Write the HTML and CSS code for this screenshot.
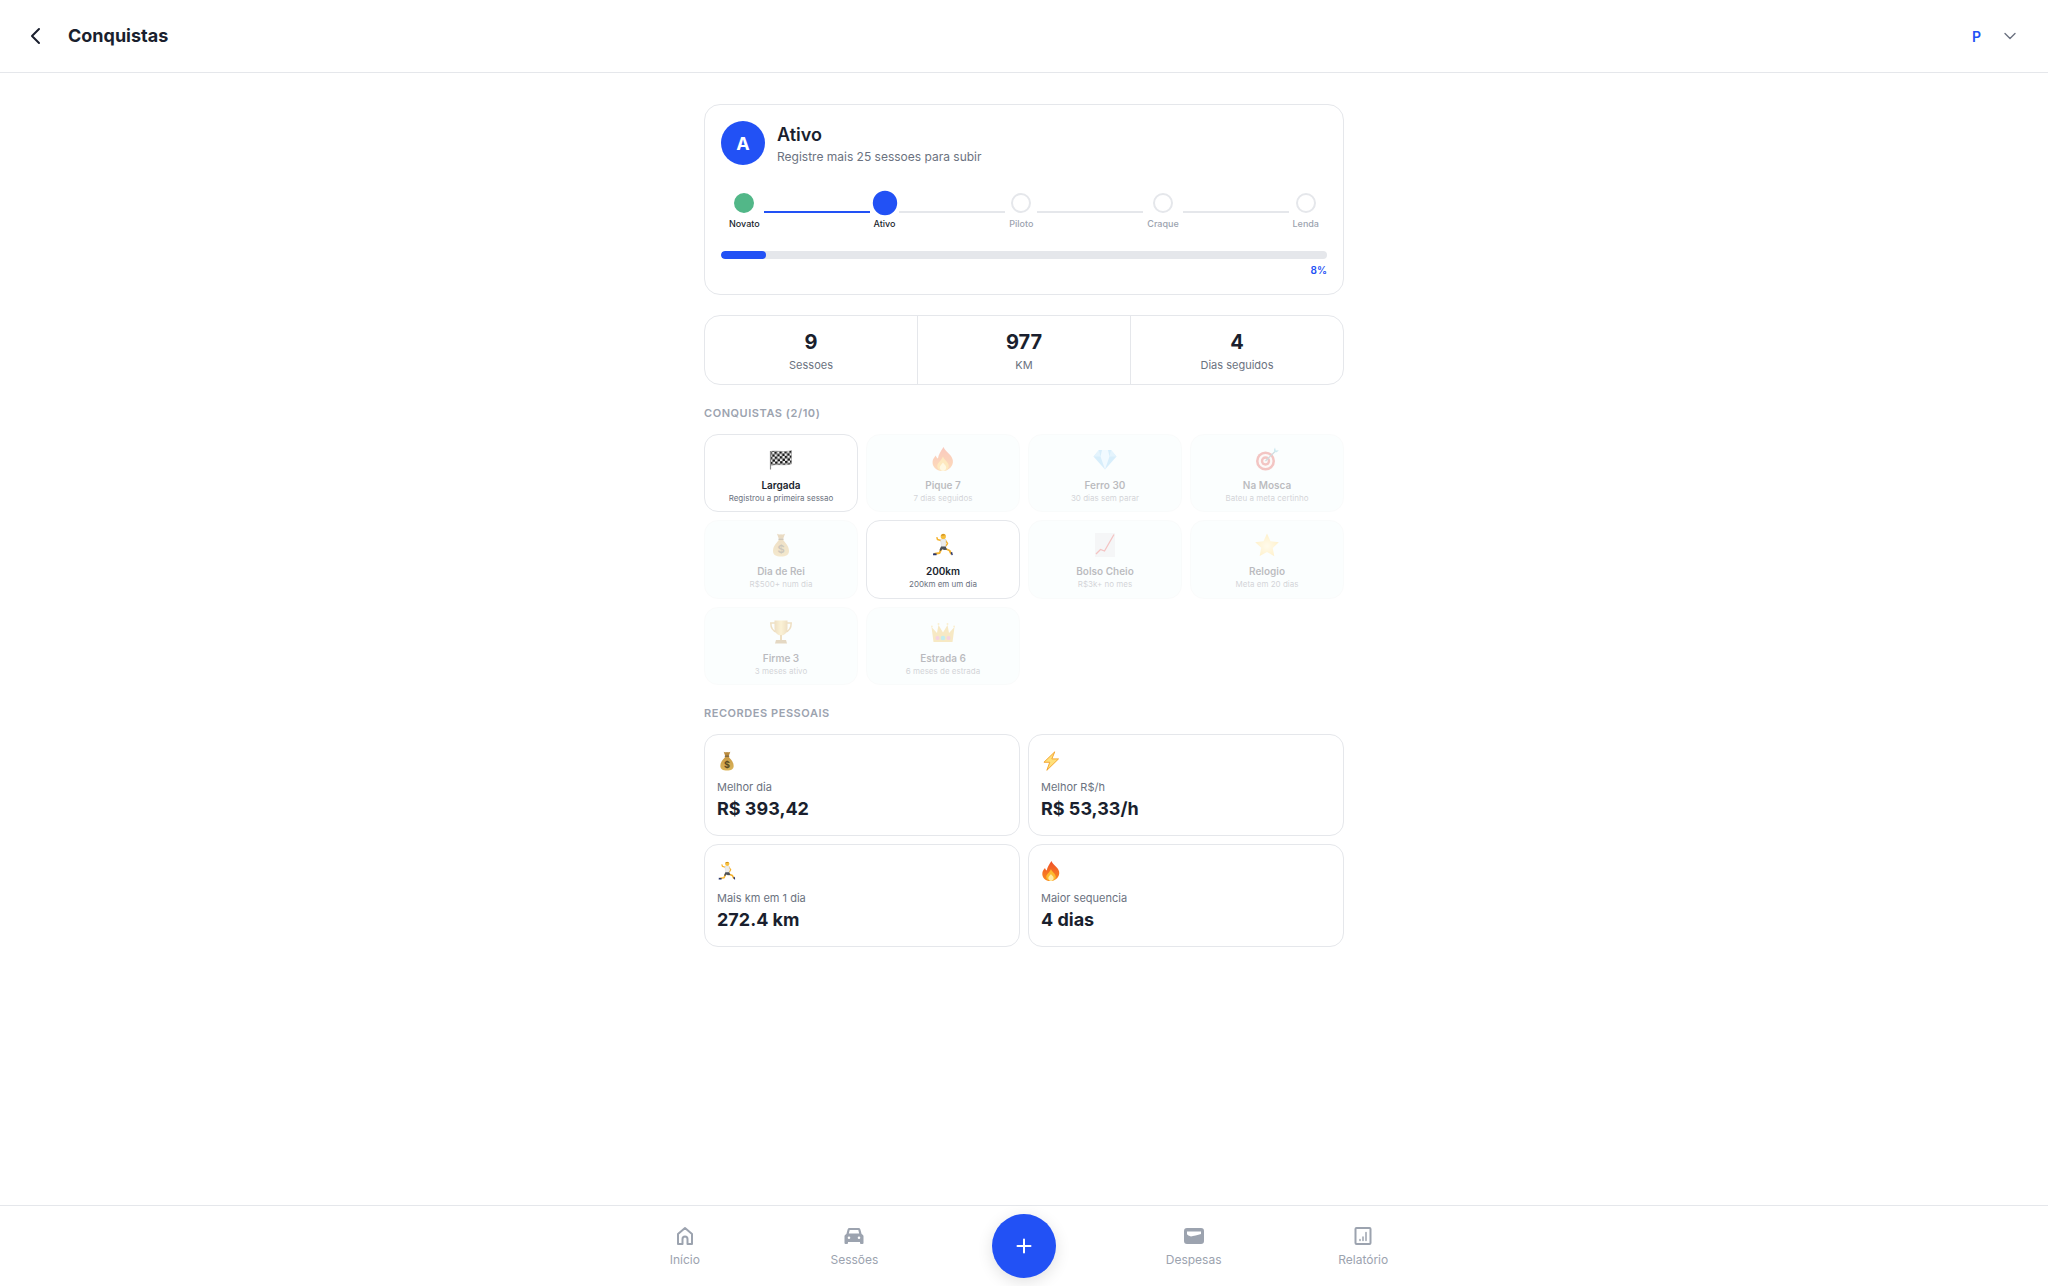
FILE: index.html
```html
<!DOCTYPE html>
<html lang="pt-BR">
<head>
<meta charset="utf-8">
<title>Conquistas</title>
<link rel="stylesheet" href="styles.css">
</head>
<body>
<svg class="defs" aria-hidden="true" xmlns="http://www.w3.org/2000/svg">
  <defs>
    <pattern id="checks" width="5" height="5" patternUnits="userSpaceOnUse" patternTransform="rotate(-4)">
      <rect width="5" height="5" fill="#f4f4f4"/>
      <rect width="2.500" height="2.500" fill="#161616"/>
      <rect x="2.500" y="2.500" width="2.500" height="2.500" fill="#161616"/>
    </pattern>
    <linearGradient id="fire" x1="0" y1="0" x2="0" y2="1">
      <stop offset="0" stop-color="#f0502a"/><stop offset="1" stop-color="#f98a1f"/>
    </linearGradient>
    <linearGradient id="sack" x1="0" y1="0" x2="0" y2="1">
      <stop offset="0" stop-color="#c99a45"/><stop offset="1" stop-color="#dcb65c"/>
    </linearGradient>
    <linearGradient id="gold" x1="0" y1="0" x2="1" y2="0">
      <stop offset="0" stop-color="#c9983a"/><stop offset=".5" stop-color="#f4d67a"/><stop offset="1" stop-color="#c9983a"/>
    </linearGradient>
    <radialGradient id="starfill" cx=".5" cy=".55" r=".55">
      <stop offset="0" stop-color="#fff3c0"/><stop offset="1" stop-color="#ffd252"/>
    </radialGradient>
    <symbol id="e-flag" viewBox="0 0 24 24">
      <path d="M1.500 4.500C8 3 14 6 22.500 3.500V17C15 19 8 16.500 1.500 18.500z" fill="url(#checks)" stroke="#777" stroke-width=".4"/>
      <path d="M1.500 4v18.500" stroke="#8a8a8a" stroke-width="1.200"/>
    </symbol>
    <symbol id="e-fire" viewBox="0 0 24 24">
      <g transform="translate(12 0) scale(1.150 1) translate(-12 0)">
        <path d="M12.500 0c1 4.500 7 7 8 13 .9 6-3.500 11-9 11S2.300 19.500 3 14c.4-2.500 1.700-4 2.700-5.500.4 1.300.9 2.300 1.900 3C8 8 10 4 12.500 0z" fill="url(#fire)"/>
        <path d="M12 9.500c.5 3 5 5.500 5 9.500 0 2.800-2.200 5-5 5s-5-2.200-5-5c0-3 3-4.500 5-9.500z" fill="#fdb92e"/>
        <path d="M12 15.500c.4 1.500 2.800 2.500 2.800 5 0 1.900-1.300 3.500-2.800 3.500s-2.800-1.600-2.800-3.500c0-2 1.800-3 2.800-5z" fill="#ffe9a3"/>
      </g>
    </symbol>
    <symbol id="e-gem" viewBox="0 0 24 24">
      <path d="M6 3h12l5.500 6.500L12 22.500.5 9.500z" fill="#7cc8f5"/>
      <path d="M6 3L.5 9.500h7zM18 3l5.500 6.500h-7z" fill="#a9dcfa"/>
      <path d="M7.500 9.500h9L12 22.500zM9 3h6l1.500 6.500h-9z" fill="#d4efff"/>
    </symbol>
    <symbol id="e-target" viewBox="0 0 24 24">
      <circle cx="10.500" cy="14" r="9.500" fill="#d8433c"/>
      <circle cx="10.500" cy="14" r="7" fill="#f7ecea"/>
      <circle cx="10.500" cy="14" r="4.700" fill="#d8433c"/>
      <circle cx="10.500" cy="14" r="2.300" fill="#f7ecea"/>
      <path d="M10.500 14L20 4.500" stroke="#5f8f9a" stroke-width="1.200"/>
      <path d="M19 2.500l1-2 .8 3 3-.3-2 2-2.800-.2z" fill="#62bcd0"/>
    </symbol>
    <symbol id="e-bag" viewBox="0 0 24 24">
      <path d="M10 6.500h4c1 2.500 6 5.500 6 11.500 0 3.800-3 5.500-8 5.500S4 21.800 4 18c0-6 5-9 6-11.500z" fill="url(#sack)"/>
      <path d="M8 .8c1.500 1 2.800 1 4 .4 1.200.6 2.500.6 4-.4l-1.800 5H9.800z" fill="#b98a3c"/>
      <rect x="9.300" y="5.500" width="5.400" height="1.500" rx=".7" fill="#6a4d1c"/>
      <text class="bag-sign" x="12" y="20" text-anchor="middle">$</text>
    </symbol>
    <symbol id="e-run" viewBox="0 0 24 24">
      <g fill="none" stroke-linecap="round" stroke-linejoin="round">
        <path d="M10.500 15.500L8.500 20 4 20.800" stroke="#f5b32e" stroke-width="1.900"/>
        <path d="M14 15.500l4.500 2 1.500 3" stroke="#f5b32e" stroke-width="1.900"/>
        <path d="M10 7.500L6.500 6.500 6 4.700" stroke="#f5b32e" stroke-width="1.500"/>
        <path d="M14.500 7.500l2 3-1.500 2.300" stroke="#f5b32e" stroke-width="1.500"/>
      </g>
      <path d="M9.500 6.500h5.500l-.5 7.500H10.500z" fill="#ececec" stroke="#c9c9c9" stroke-width=".4"/>
      <path d="M10 13.500h4.700l1.300 3.300-3 .2-1.500-.8L9.500 18l-1-1z" fill="#4d5158"/>
      <circle cx="12.300" cy="3.400" r="2.600" fill="#f7bf3c"/>
      <path d="M9.800 2.800c.4-1.700 3.600-2.400 4.800-.6-1.300.1-3.500.2-4.800.6z" fill="#c98a1e"/>
      <path d="M2.200 20.200l3.500.4-.2 1.700H2z" fill="#26346e"/>
      <path d="M19.500 19.500l1.700-.6.600 3-1.200.3z" fill="#26346e"/>
    </symbol>
    <symbol id="e-chart" viewBox="0 0 24 24">
      <rect x="2" width="20" height="24" fill="#dfe2e8"/>
      <path d="M3 21l4.500-4.500 4 1.500L21 1.500" fill="none" stroke="#dd3f3a" stroke-width="1.300"/>
    </symbol>
    <symbol id="e-star" viewBox="0 0 24 24">
      <path d="M12 .5l3.500 7.700 8.300 1-6.100 5.700 1.600 8.300L12 18.900 4.700 23l1.600-8.300L.2 9.200l8.300-1z" fill="url(#starfill)"/>
    </symbol>
    <symbol id="e-trophy" viewBox="0 0 24 24">
      <path d="M6 3H1.800c0 5 2 8 6 9M18 3h4.200c0 5-2 8-6 9" fill="none" stroke="#c9983a" stroke-width="1.500"/>
      <path d="M5.500 .5h13V8c0 4.500-3 7.500-6.500 7.500S5.500 12.500 5.500 8z" fill="url(#gold)"/>
      <path d="M11 15h2v5h-2z" fill="#c9983a"/>
      <path d="M7 20h10l1 3.500H6z" fill="#a9803c"/>
    </symbol>
    <symbol id="e-crown" viewBox="0 0 24 24">
      <path d="M.5 7l5.500 6L7.500 5 12 12.500 16.500 5 18 13l5.500-6L21.500 22h-19z" fill="#e6b73f"/>
      <circle cx="6.500" cy="18" r="2" fill="#e36fa3"/>
      <circle cx="12" cy="18" r="2.300" fill="#3fc4c9"/>
      <circle cx="17.500" cy="18" r="2" fill="#e36fa3"/>
      <circle cx=".9" cy="6.500" r=".9" fill="#f2cf68"/><circle cx="7.500" cy="4" r="1" fill="#f2cf68"/><circle cx="16.500" cy="4" r="1" fill="#f2cf68"/><circle cx="23.100" cy="6.500" r=".9" fill="#f2cf68"/>
    </symbol>
    <symbol id="e-bolt" viewBox="0 0 24 24">
      <path d="M16.500 1L3.500 13.500h7L7 23.200l14-13.700h-8z" fill="#ffe07a" stroke="#f4a733" stroke-width="1.200" stroke-linejoin="round"/>
    </symbol>
  </defs>
</svg>
<div class="app">
  <header class="topbar">
    <div class="topbar-left">
      <svg class="back" width="24" height="24" viewBox="0 0 24 24" fill="none" stroke="#1a1f2e" stroke-width="2" stroke-linecap="round" stroke-linejoin="round"><path d="M15 5l-7 7 7 7"/></svg>
      <h1 class="page-title">Conquistas</h1>
    </div>
    <div class="topbar-right">
      <span class="user-initial">P</span>
      <svg width="16" height="16" viewBox="0 0 16 16" fill="none" stroke="#6b7280" stroke-width="1.400" stroke-linecap="round" stroke-linejoin="round"><path d="M3 5.500l5 5 5-5"/></svg>
    </div>
  </header>

  <main class="content">
    <section class="card level">
      <div class="level-head">
        <div class="avatar">A</div>
        <div class="level-text">
          <div class="level-name">Ativo</div>
          <div class="level-sub">Registre mais 25 sessoes para subir</div>
        </div>
      </div>
      <div class="steps">
        <div class="step on"><span class="dot done"></span><span class="step-label">Novato</span></div>
        <span class="link on"></span>
        <div class="step on"><span class="dot current"></span><span class="step-label">Ativo</span></div>
        <span class="link"></span>
        <div class="step"><span class="dot"></span><span class="step-label">Piloto</span></div>
        <span class="link"></span>
        <div class="step"><span class="dot"></span><span class="step-label">Craque</span></div>
        <span class="link"></span>
        <div class="step"><span class="dot"></span><span class="step-label">Lenda</span></div>
      </div>
      <div class="progress"><div class="progress-fill" style="width:7.5%"></div></div>
      <div class="progress-pct">8%</div>
    </section>

    <section class="card stats">
      <div class="stat"><div class="stat-value">9</div><div class="stat-label">Sessoes</div></div>
      <div class="stat"><div class="stat-value">977</div><div class="stat-label">KM</div></div>
      <div class="stat"><div class="stat-value">4</div><div class="stat-label">Dias seguidos</div></div>
    </section>

    <h2 class="section-title">CONQUISTAS (2/10)</h2>
    <section class="badges">
      <div class="badge"><svg class="badge-emoji"><use href="#e-flag"/></svg><div class="badge-name">Largada</div><div class="badge-desc">Registrou a primeira sessao</div></div>
      <div class="badge locked"><svg class="badge-emoji"><use href="#e-fire"/></svg><div class="badge-name">Pique 7</div><div class="badge-desc">7 dias seguidos</div></div>
      <div class="badge locked"><svg class="badge-emoji"><use href="#e-gem"/></svg><div class="badge-name">Ferro 30</div><div class="badge-desc">30 dias sem parar</div></div>
      <div class="badge locked"><svg class="badge-emoji"><use href="#e-target"/></svg><div class="badge-name">Na Mosca</div><div class="badge-desc">Bateu a meta certinho</div></div>
      <div class="badge locked"><svg class="badge-emoji"><use href="#e-bag"/></svg><div class="badge-name">Dia de Rei</div><div class="badge-desc">R$500+ num dia</div></div>
      <div class="badge"><svg class="badge-emoji"><use href="#e-run"/></svg><div class="badge-name">200km</div><div class="badge-desc">200km em um dia</div></div>
      <div class="badge locked"><svg class="badge-emoji"><use href="#e-chart"/></svg><div class="badge-name">Bolso Cheio</div><div class="badge-desc">R$3k+ no mes</div></div>
      <div class="badge locked"><svg class="badge-emoji"><use href="#e-star"/></svg><div class="badge-name">Relogio</div><div class="badge-desc">Meta em 20 dias</div></div>
      <div class="badge locked"><svg class="badge-emoji"><use href="#e-trophy"/></svg><div class="badge-name">Firme 3</div><div class="badge-desc">3 meses ativo</div></div>
      <div class="badge locked"><svg class="badge-emoji"><use href="#e-crown"/></svg><div class="badge-name">Estrada 6</div><div class="badge-desc">6 meses de estrada</div></div>
    </section>

    <h2 class="section-title">RECORDES PESSOAIS</h2>
    <section class="records">
      <div class="record"><svg class="record-emoji"><use href="#e-bag"/></svg><div class="record-label">Melhor dia</div><div class="record-value">R$ 393,42</div></div>
      <div class="record"><svg class="record-emoji"><use href="#e-bolt"/></svg><div class="record-label">Melhor R$/h</div><div class="record-value">R$ 53,33/h</div></div>
      <div class="record"><svg class="record-emoji"><use href="#e-run"/></svg><div class="record-label">Mais km em 1 dia</div><div class="record-value">272.4 km</div></div>
      <div class="record"><svg class="record-emoji"><use href="#e-fire"/></svg><div class="record-label">Maior sequencia</div><div class="record-value">4 dias</div></div>
    </section>
  </main>

  <nav class="bottom-nav">
    <div class="nav-inner">
      <div class="nav-item">
        <svg width="24" height="24" viewBox="0 0 24 24" fill="none" stroke="#9ca3af" stroke-width="2" stroke-linejoin="round" stroke-linecap="round"><path d="M5 20V10l7-6 7 6v10h-4.500v-5a2.500 2.500 0 0 0-5 0v5z"/></svg>
        <span>Início</span>
      </div>
      <div class="nav-item">
        <svg width="24" height="24" viewBox="0 0 24 24" fill="#9ca3af"><path d="M7.500 4h9a2 2 0 0 1 1.900 1.400L19.600 10c1 .4 1.900 1.300 1.900 2.300V19a1 1 0 0 1-1 1h-1.500a1 1 0 0 1-1-1v-1h-12v1a1 1 0 0 1-1 1H3.500a1 1 0 0 1-1-1v-6.700c0-1 .9-1.900 1.900-2.300L5.600 5.400A2 2 0 0 1 7.500 4zm.2 2L6.800 9.500h10.400L16.300 6zM7 12.500a1.300 1.300 0 1 0 0 2.600 1.300 1.300 0 0 0 0-2.600zm10 0a1.300 1.300 0 1 0 0 2.600 1.300 1.300 0 0 0 0-2.600z" fill-rule="evenodd"/></svg>
        <span>Sessões</span>
      </div>
      <div class="nav-item">
        <button class="fab" type="button" aria-label="Adicionar">
          <svg width="24" height="24" viewBox="0 0 24 24" fill="none" stroke="#fff" stroke-width="2" stroke-linecap="round"><path d="M12 5.500v13M5.500 12h13"/></svg>
        </button>
      </div>
      <div class="nav-item">
        <svg width="24" height="24" viewBox="0 0 24 24" fill="#9ca3af"><path d="M5 4h14a3 3 0 0 1 3 3v10a3 3 0 0 1-3 3H5a3 3 0 0 1-3-3V7a3 3 0 0 1 3-3zm0 3.500V10c0 1 2.500 2 4 2.500 2-.5 7-1.500 10-2.500V7.500z" fill-rule="evenodd"/></svg>
        <span>Despesas</span>
      </div>
      <div class="nav-item">
        <svg width="24" height="24" viewBox="0 0 24 24" fill="none" stroke="#9ca3af" stroke-width="2" stroke-linecap="round"><rect x="4.500" y="4" width="15" height="16" rx="1"/><path d="M9 16.500V15.500M12 16.500v-3.500M15 16.500V8.500" stroke-width="1.500"/></svg>
        <span>Relatório</span>
      </div>
    </div>
  </nav>
</div>
</body>
</html>
```

FILE: styles.css
```css
* { box-sizing: border-box; margin: 0; padding: 0; }
html, body { height: 100%; background: #fff; }
body {
  font-family: Inter, "Noto Sans", sans-serif;
  color: #1a1f2e;
}
.defs { position: absolute; width: 0; height: 0; }
.bag-sign { font-family: Inter, sans-serif; font-size: 11px; font-weight: 700; fill: #5b4a22; }
.app { height: 1286px; display: flex; flex-direction: column; overflow: hidden; }

.topbar {
  height: 73px;
  flex: none;
  display: flex;
  align-items: center;
  justify-content: space-between;
  padding: 0 30px 0 24px;
  border-bottom: 1px solid #e5e7eb;
}
.topbar-left { display: flex; align-items: center; gap: 20px; }
.back { display: block; }
.page-title { font-size: 18px; font-weight: 700; line-height: 24px; }
.topbar-right { display: flex; align-items: center; gap: 21px; }
.user-initial { font-size: 14px; font-weight: 600; color: #2251f5; }
.topbar-right svg { display: block; }

.content {
  flex: 1;
  width: 640px;
  margin: 0 auto;
  padding-top: 31px;
}
.card {
  border: 1px solid #e5e7eb;
  border-radius: 16px;
  background: #fff;
}
.level { padding: 16px; height: 191px; }
.level-head { display: flex; gap: 12px; align-items: flex-start; height: 44px; }
.level-text { padding-top: 2px; }
.avatar {
  width: 44px;
  height: 44px;
  border-radius: 50%;
  background: #2251f5;
  color: #fff;
  font-size: 18px;
  font-weight: 700;
  display: flex;
  align-items: center;
  justify-content: center;
}
.level-name { font-size: 18px; font-weight: 600; line-height: 24px; }
.level-sub { font-size: 12px; line-height: 18px; color: #6b7280; margin-top: 1px; }

.steps {
  display: flex;
  align-items: center;
  padding: 0 8px;
  margin-top: 28px;
}
.step { display: flex; flex-direction: column; align-items: center; gap: 4px; }
.dot {
  width: 20px;
  height: 20px;
  border-radius: 50%;
  border: 2px solid #e5e7eb;
  background: #fff;
}
.dot.done { background: #52b788; border-color: #52b788; }
.dot.current { background: #2251f5; border-color: #2251f5; transform: scale(1.22); }
.step-label { font-size: 9px; line-height: 14px; font-weight: 500; color: #9ca3af; }
.step.on .step-label { color: #1a1f2e; }
.link { flex: 1; height: 2px; margin: 0 4px; background: #e5e7eb; }
.link.on { background: #2251f5; }

.progress { height: 8px; border-radius: 4px; background: #e5e7eb; margin-top: 20px; overflow: hidden; }
.progress-fill { height: 100%; border-radius: 4px; background: #2251f5; }
.progress-pct { text-align: right; font-size: 10px; font-weight: 600; line-height: 14px; color: #2251f5; margin-top: 4px; }

.stats { display: grid; grid-template-columns: 213px 213px 1fr; margin-top: 20px; height: 70px; overflow: hidden; }
.stat { text-align: center; padding-top: 13px; border-right: 1px solid #e5e7eb; }
.stat:last-child { border-right: 0; }
.stat-value { font-size: 20px; font-weight: 700; line-height: 26px; }
.stat-label { font-size: 11px; line-height: 16px; color: #6b7280; margin-top: 2px; }

.section-title {
  font-size: 11px;
  font-weight: 600;
  letter-spacing: 0.55px;
  line-height: 14px;
  color: #9ca3af;
  margin-top: 21px;
}
.badges {
  display: grid;
  grid-template-columns: repeat(4, 1fr);
  grid-template-rows: 78px 79px 78px;
  gap: 8px;
  margin-top: 14px;
}
.badge {
  border: 1px solid #e5e7eb;
  border-radius: 14px;
  background: #fff;
  text-align: center;
  padding-top: 12px;
}
.badge.locked { background: #f5fcfc; border-color: #eef3f3; opacity: 0.3; }
.badge-emoji { display: block; width: 24px; height: 24px; margin: 0 auto; }
.badge-name { font-size: 10px; font-weight: 600; line-height: 14px; margin-top: 7px; }
.badge-desc { font-size: 8px; line-height: 12px; color: #6b7280; }

.records {
  display: grid;
  grid-template-columns: repeat(2, 1fr);
  grid-template-rows: 102px 103px;
  gap: 8px;
  margin-top: 14px;
}
.record {
  border: 1px solid #e5e7eb;
  border-radius: 14px;
  padding: 16px 12px 0;
  background: #fff;
}
.record-emoji { display: block; width: 20px; height: 20px; }
.record-label { font-size: 11px; line-height: 14px; color: #6b7280; margin-top: 10px; }
.record:nth-child(-n+2) .record-label { margin-top: 9px; }
.record-value { font-size: 18px; font-weight: 700; line-height: 24px; margin-top: 3px; }

.bottom-nav { height: 81px; flex: none; border-top: 1px solid #e5e7eb; background: #fff; }
.nav-inner {
  width: 848px;
  margin: 0 auto;
  height: 100%;
  display: grid;
  grid-template-columns: repeat(5, 1fr);
}
.nav-item {
  display: flex;
  flex-direction: column;
  align-items: center;
  padding-top: 18px;
  gap: 4px;
  font-size: 12px;
  line-height: 16px;
  color: #9ca3af;
}
.nav-item svg { display: block; }
.fab {
  width: 64px;
  height: 64px;
  margin-top: -10px;
  border: 0;
  border-radius: 50%;
  background: #2251f5;
  display: flex;
  align-items: center;
  justify-content: center;
  box-shadow: 0 4px 16px rgba(0, 0, 0, 0.12);
}
```
